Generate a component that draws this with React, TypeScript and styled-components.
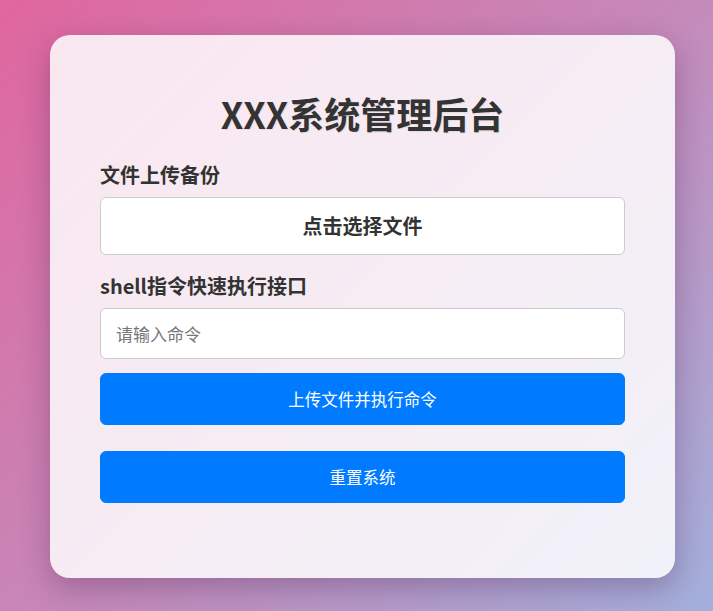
import React from "react";
import styled, { createGlobalStyle } from "styled-components";

const GlobalStyle = createGlobalStyle`
  html, body {
    margin: 0;
    padding: 0;
    height: 100%;
  }
  body {
    font-family: "Microsoft YaHei", "Noto Sans CJK SC", "Noto Sans", sans-serif;
    background: linear-gradient(135deg, #e0669f 0%, #c688b8 50%, #a3b0dc 100%);
    background-attachment: fixed;
    min-height: 611px;
  }
  * { box-sizing: border-box; }
`;

const Page = styled.div`
  display: flex;
  justify-content: flex-start;
  align-items: flex-start;
  padding: 35px 0 0 50px;
  min-height: 611px;
`;

const Card = styled.div`
  width: 625px;
  height: 543px;
  padding: 50px;
  background: rgba(255, 255, 255, 0.84);
  border-radius: 20px;
  box-shadow: 0 10px 30px rgba(60, 20, 70, 0.3);
  display: flex;
  flex-direction: column;
`;

const Title = styled.h1`
  margin: 4px 0 25px;
  font-size: 36px;
  line-height: 48px;
  font-weight: 700;
  color: #333;
  text-align: center;
  text-shadow: 1px 1px 1px rgba(0, 0, 0, 0.08);
`;

const Label = styled.label`
  display: block;
  margin-bottom: 9px;
  font-size: 20px;
  line-height: 26px;
  font-weight: 700;
  color: #333;
`;

const Group = styled.div<{ $gap: number }>`
  display: flex;
  flex-direction: column;
  margin-bottom: ${(p) => p.$gap}px;
`;

const FilePicker = styled.div`
  height: 58px;
  padding: 15px;
  border: 1px solid #ccc;
  border-radius: 6px;
  background: #fff;
  text-align: center;
  font-size: 20px;
  line-height: 26px;
  font-weight: 700;
  color: #333;
  cursor: pointer;
`;

const TextInput = styled.input`
  height: 51px;
  width: 100%;
  padding: 15px;
  border: 1px solid #ccc;
  border-radius: 6px;
  background: #fff;
  font-family: inherit;
  font-size: 17px;
  line-height: 19px;
  color: #333;
  outline: none;
  &::placeholder {
    color: #767676;
  }
`;

const Button = styled.button<{ $mt: number }>`
  height: 52px;
  width: 100%;
  margin-top: ${(p) => p.$mt}px;
  padding: 15px;
  border: 1px solid #007bff;
  border-radius: 6px;
  background: #007bff;
  color: #fff;
  font-family: inherit;
  font-size: 16.5px;
  line-height: 20px;
  cursor: pointer;
`;

export default function App() {
  return (
    <>
      <GlobalStyle />
      <Page>
        <Card>
          <Title>XXX系统管理后台</Title>
          <Group $gap={18}>
            <Label>文件上传备份</Label>
            <FilePicker>点击选择文件</FilePicker>
          </Group>
          <Group $gap={0}>
            <Label htmlFor="cmd">shell指令快速执行接口</Label>
            <TextInput id="cmd" type="text" placeholder="请输入命令" />
          </Group>
          <Button $mt={14}>上传文件并执行命令</Button>
          <Button $mt={26}>重置系统</Button>
        </Card>
      </Page>
    </>
  );
}
